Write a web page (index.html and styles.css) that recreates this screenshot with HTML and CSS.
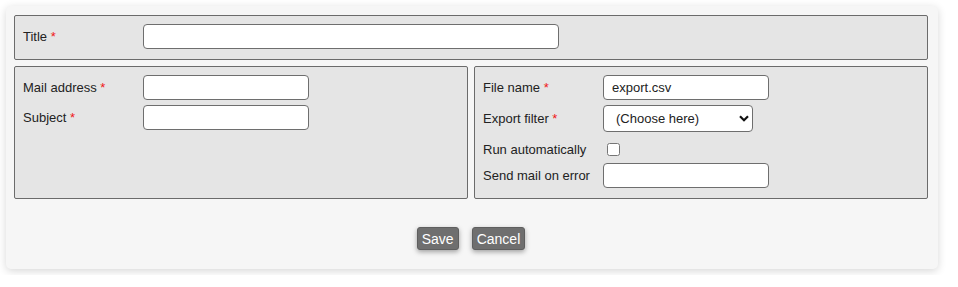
FILE: index.html
```html
<!DOCTYPE html>
<html lang="en">
<head>
    <meta charset="UTF-8">
    <title>Export job</title>
    <link rel="stylesheet" href="styles.css">
</head>
<body>
<form class="card">
    <div class="group">
        <label class="label" for="title">Title <span class="req">*</span></label>
        <input class="field wide" id="title" type="text">
    </div>

    <div class="columns">
        <div class="group">
            <label class="label" for="mail">Mail address <span class="req">*</span></label>
            <input class="field" id="mail" type="text">

            <label class="label" for="subject">Subject <span class="req">*</span></label>
            <input class="field" id="subject" type="text">
        </div>

        <div class="group">
            <label class="label" for="file">File name <span class="req">*</span></label>
            <input class="field" id="file" type="text" value="export.csv">

            <label class="label" for="filter">Export filter <span class="req">*</span></label>
            <span class="select-wrap">
                <select class="select" id="filter">
                    <option>(Choose here)</option>
                </select>
                <svg class="chevron" width="10" height="7" viewBox="0 0 10 7">
                    <path d="M1 1.2 L5 5.2 L9 1.2" fill="none" stroke="#111" stroke-width="2.2"/>
                </svg>
            </span>

            <label class="label label-check" for="auto">Run automatically</label>
            <span class="check-cell"><input class="check" id="auto" type="checkbox"></span>

            <label class="label" for="errmail">Send mail on error</label>
            <input class="field" id="errmail" type="text">
        </div>
    </div>

    <div class="actions">
        <button class="btn" type="button">Save</button>
        <button class="btn" type="button">Cancel</button>
    </div>
</form>
</body>
</html>
```

FILE: styles.css
```css
* {
    box-sizing: border-box;
}

body {
    margin: 0;
    padding: 6px;
    background: #ffffff;
    font-family: 'Liberation Sans', Arial, sans-serif;
    font-size: 13px;
    color: #222;
}

.card {
    width: 932px;
    padding: 9px 10px 19px 8px;
    background: #f6f6f6;
    border-radius: 5px;
    box-shadow: 0 2px 8px rgba(0, 0, 0, 0.16);
}

.group {
    display: grid;
    grid-template-columns: 120px auto;
    grid-auto-rows: min-content;
    row-gap: 5px;
    align-items: center;
    justify-items: start;
    padding: 8px 8px 10px;
    background: #e5e5e5;
    border: 1px solid #6b6b6b;
    border-radius: 2px;
}

.columns {
    display: grid;
    grid-template-columns: 1fr 1fr;
    gap: 6px;
    margin-top: 6px;
}

.label {
    line-height: 16px;
}

.label-check {
    margin-top: 5px;
}

.req {
    color: #f01818;
}

.field {
    width: 166px;
    height: 25px;
    padding: 0 8px;
    border: 1px solid #6e6e6e;
    border-radius: 4px;
    background: #fff;
    font-family: inherit;
    font-size: 13px;
    color: #222;
    outline: none;
}

.field.wide {
    width: 416px;
}

.select-wrap {
    position: relative;
    display: inline-block;
}

.select {
    display: block;
    width: 150px;
    height: 27px;
    padding: 0 0 0 12px;
    border: 1px solid #6e6e6e;
    border-radius: 4px;
    background: #fff;
    font-family: inherit;
    font-size: 13px;
    color: #222;
    appearance: none;
    -webkit-appearance: none;
}

.chevron {
    position: absolute;
    right: 4px;
    top: 10px;
    pointer-events: none;
}

.check-cell {
    display: block;
    height: 21px;
}

.check {
    width: 13px;
    height: 13px;
    margin: 6px 0 0 4px;
    display: block;
}

.actions {
    display: flex;
    justify-content: center;
    gap: 13px;
    margin-top: 28px;
}

.btn {
    height: 23px;
    padding: 0 4px;
    border: 1px solid #5f5f5f;
    border-radius: 3px;
    background: #6f6f6f;
    color: #fff;
    font-family: inherit;
    font-size: 14px;
    box-shadow: 0 2px 5px rgba(0, 0, 0, 0.35);
    cursor: pointer;
}
```
